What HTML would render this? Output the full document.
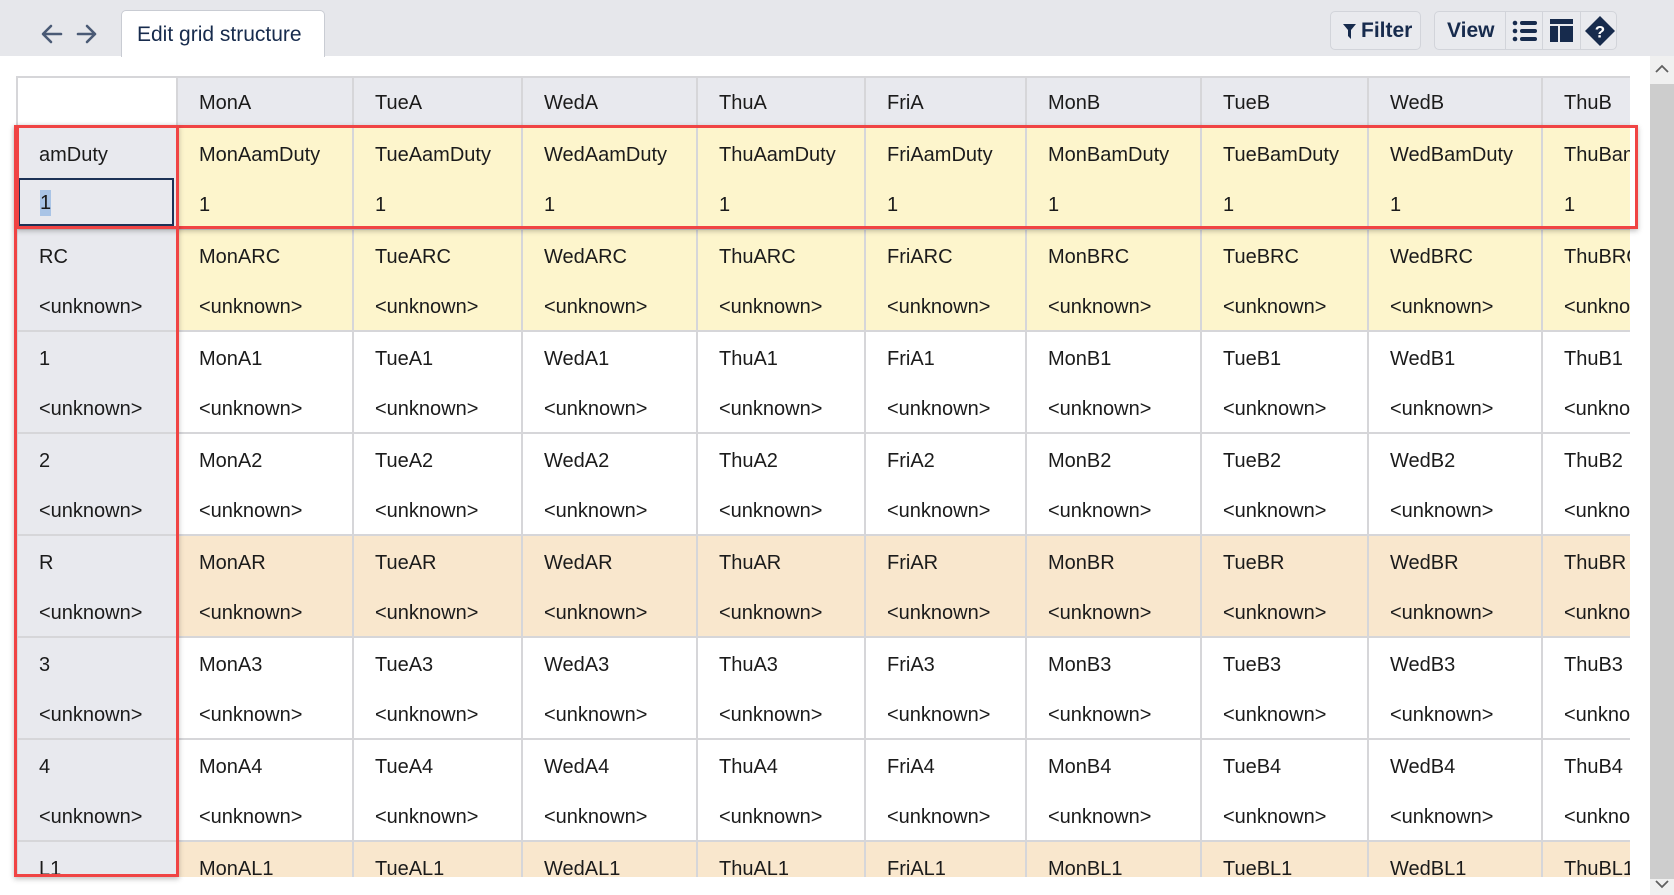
<!DOCTYPE html>
<html style="overflow:hidden"><head><meta charset="utf-8"><style>
*{box-sizing:border-box;margin:0;padding:0}
body{width:1674px;height:895px;overflow:hidden;background:#fff;font-family:"Liberation Sans",sans-serif;position:relative;color:#1b1b1b}
.top{position:absolute;left:0;top:0;width:1674px;height:56px;background:#e6e7eb}
.tab{position:absolute;left:121px;top:10px;width:204px;height:47px;background:#fff;border:1px solid #c9ccd3;border-bottom:none;border-radius:5px 5px 0 0;font-size:21px;color:#172b4d;padding:12px 0 0 15px}
.btn{position:absolute;top:11px;height:39px;background:#e9eaee;border:1px solid #d2d4da;border-radius:5px;color:#172b4d;font-weight:bold;font-size:21px}
.grid{position:absolute;left:16px;top:76px;width:1614px;height:801px;overflow:hidden}
table{border-collapse:collapse;table-layout:fixed;width:1705px}
td{border:2px solid #d6d6d9;height:102px;vertical-align:top;font-size:20px;padding:0 0 0 21px;white-space:nowrap;overflow:hidden;position:relative}
tr.h td{height:50px;background:#e8e9ee;padding-top:14px}
tr.h td:first-child{background:#fff}
td div{position:absolute;left:21px;line-height:26px}
td .a{top:14px}td .b{top:64px}
td:first-child{background:#e8e9ee}
tr.y td{background:#fdf5cc}tr.o td{background:#f9e7cd}
tr.y td:first-child,tr.o td:first-child{background:#e8e9ee}
.red{position:absolute;border:3px solid #f04444;box-shadow:0 2px 5px rgba(0,0,0,.25)}
.sb{position:absolute;left:1650px;top:56px;width:24px;height:839px;background:#f0f0f0;overflow:hidden}
</style></head><body>
<div class="top"></div>
<svg style="position:absolute;left:40px;top:23px" width="60" height="22"><g fill="none" stroke="#4a5a75" stroke-width="2.6" stroke-linecap="round" stroke-linejoin="round"><path d="M21 11H4M11 3L3 11l8 8"/><path d="M38 11h17M47 3l8 8-8 8"/></g></svg>
<div class="tab">Edit grid structure</div>
<div class="btn" style="left:1330px;width:91px"><svg style="position:absolute;left:12px;top:12px" width="13" height="15"><path d="M0 0h13L8 6v9L5 12V6z" fill="#172b4d"/></svg><span style="position:absolute;left:30px;top:7px">Filter</span></div>
<div class="btn" style="left:1434px;width:183px">
<span style="position:absolute;left:12px;top:7px">View</span>
<div style="position:absolute;left:70px;top:0;width:1px;height:37px;background:#d2d4da"></div>
<div style="position:absolute;left:107px;top:0;width:1px;height:37px;background:#d2d4da"></div>
<div style="position:absolute;left:145px;top:0;width:1px;height:37px;background:#d2d4da"></div>
<svg style="position:absolute;left:77px;top:8px" width="26" height="22" fill="#172b4d"><circle cx="3" cy="3" r="2.3"/><circle cx="3" cy="11" r="2.3"/><circle cx="3" cy="19" r="2.3"/><rect x="8" y="1" width="17" height="4" rx="2"/><rect x="8" y="9" width="17" height="4" rx="2"/><rect x="8" y="17" width="17" height="4" rx="2"/></svg>
<svg style="position:absolute;left:115px;top:7px" width="23" height="23" fill="#172b4d"><rect x="0" y="0" width="23" height="5"/><rect x="0" y="7" width="8" height="16"/><rect x="10" y="7" width="13" height="16"/></svg>
<svg style="position:absolute;left:149px;top:3px" width="32" height="32"><path d="M16 1L31 16 16 31 1 16z" fill="#172b4d"/><text x="16" y="22.5" text-anchor="middle" font-family="Liberation Sans" font-weight="bold" font-size="17" fill="#fff">?</text></svg>
</div>
<div class="grid"><table>
<colgroup><col style="width:160px"><col style="width:176px"><col style="width:169px"><col style="width:175px"><col style="width:168px"><col style="width:161px"><col style="width:175px"><col style="width:167px"><col style="width:174px"><col style="width:180px"></colgroup>
<tr class="h"><td></td><td>MonA</td><td>TueA</td><td>WedA</td><td>ThuA</td><td>FriA</td><td>MonB</td><td>TueB</td><td>WedB</td><td>ThuB</td></tr>
<tr class="y"><td><div class="a">amDuty</div></td><td><div class="a">MonAamDuty</div><div class="b">1</div></td><td><div class="a">TueAamDuty</div><div class="b">1</div></td><td><div class="a">WedAamDuty</div><div class="b">1</div></td><td><div class="a">ThuAamDuty</div><div class="b">1</div></td><td><div class="a">FriAamDuty</div><div class="b">1</div></td><td><div class="a">MonBamDuty</div><div class="b">1</div></td><td><div class="a">TueBamDuty</div><div class="b">1</div></td><td><div class="a">WedBamDuty</div><div class="b">1</div></td><td><div class="a">ThuBamDuty</div><div class="b">1</div></td></tr>
<tr class="y"><td><div class="a">RC</div><div class="b">&lt;unknown&gt;</div></td><td><div class="a">MonARC</div><div class="b">&lt;unknown&gt;</div></td><td><div class="a">TueARC</div><div class="b">&lt;unknown&gt;</div></td><td><div class="a">WedARC</div><div class="b">&lt;unknown&gt;</div></td><td><div class="a">ThuARC</div><div class="b">&lt;unknown&gt;</div></td><td><div class="a">FriARC</div><div class="b">&lt;unknown&gt;</div></td><td><div class="a">MonBRC</div><div class="b">&lt;unknown&gt;</div></td><td><div class="a">TueBRC</div><div class="b">&lt;unknown&gt;</div></td><td><div class="a">WedBRC</div><div class="b">&lt;unknown&gt;</div></td><td><div class="a">ThuBRC</div><div class="b">&lt;unknown&gt;</div></td></tr>
<tr><td><div class="a">1</div><div class="b">&lt;unknown&gt;</div></td><td><div class="a">MonA1</div><div class="b">&lt;unknown&gt;</div></td><td><div class="a">TueA1</div><div class="b">&lt;unknown&gt;</div></td><td><div class="a">WedA1</div><div class="b">&lt;unknown&gt;</div></td><td><div class="a">ThuA1</div><div class="b">&lt;unknown&gt;</div></td><td><div class="a">FriA1</div><div class="b">&lt;unknown&gt;</div></td><td><div class="a">MonB1</div><div class="b">&lt;unknown&gt;</div></td><td><div class="a">TueB1</div><div class="b">&lt;unknown&gt;</div></td><td><div class="a">WedB1</div><div class="b">&lt;unknown&gt;</div></td><td><div class="a">ThuB1</div><div class="b">&lt;unknown&gt;</div></td></tr>
<tr><td><div class="a">2</div><div class="b">&lt;unknown&gt;</div></td><td><div class="a">MonA2</div><div class="b">&lt;unknown&gt;</div></td><td><div class="a">TueA2</div><div class="b">&lt;unknown&gt;</div></td><td><div class="a">WedA2</div><div class="b">&lt;unknown&gt;</div></td><td><div class="a">ThuA2</div><div class="b">&lt;unknown&gt;</div></td><td><div class="a">FriA2</div><div class="b">&lt;unknown&gt;</div></td><td><div class="a">MonB2</div><div class="b">&lt;unknown&gt;</div></td><td><div class="a">TueB2</div><div class="b">&lt;unknown&gt;</div></td><td><div class="a">WedB2</div><div class="b">&lt;unknown&gt;</div></td><td><div class="a">ThuB2</div><div class="b">&lt;unknown&gt;</div></td></tr>
<tr class="o"><td><div class="a">R</div><div class="b">&lt;unknown&gt;</div></td><td><div class="a">MonAR</div><div class="b">&lt;unknown&gt;</div></td><td><div class="a">TueAR</div><div class="b">&lt;unknown&gt;</div></td><td><div class="a">WedAR</div><div class="b">&lt;unknown&gt;</div></td><td><div class="a">ThuAR</div><div class="b">&lt;unknown&gt;</div></td><td><div class="a">FriAR</div><div class="b">&lt;unknown&gt;</div></td><td><div class="a">MonBR</div><div class="b">&lt;unknown&gt;</div></td><td><div class="a">TueBR</div><div class="b">&lt;unknown&gt;</div></td><td><div class="a">WedBR</div><div class="b">&lt;unknown&gt;</div></td><td><div class="a">ThuBR</div><div class="b">&lt;unknown&gt;</div></td></tr>
<tr><td><div class="a">3</div><div class="b">&lt;unknown&gt;</div></td><td><div class="a">MonA3</div><div class="b">&lt;unknown&gt;</div></td><td><div class="a">TueA3</div><div class="b">&lt;unknown&gt;</div></td><td><div class="a">WedA3</div><div class="b">&lt;unknown&gt;</div></td><td><div class="a">ThuA3</div><div class="b">&lt;unknown&gt;</div></td><td><div class="a">FriA3</div><div class="b">&lt;unknown&gt;</div></td><td><div class="a">MonB3</div><div class="b">&lt;unknown&gt;</div></td><td><div class="a">TueB3</div><div class="b">&lt;unknown&gt;</div></td><td><div class="a">WedB3</div><div class="b">&lt;unknown&gt;</div></td><td><div class="a">ThuB3</div><div class="b">&lt;unknown&gt;</div></td></tr>
<tr><td><div class="a">4</div><div class="b">&lt;unknown&gt;</div></td><td><div class="a">MonA4</div><div class="b">&lt;unknown&gt;</div></td><td><div class="a">TueA4</div><div class="b">&lt;unknown&gt;</div></td><td><div class="a">WedA4</div><div class="b">&lt;unknown&gt;</div></td><td><div class="a">ThuA4</div><div class="b">&lt;unknown&gt;</div></td><td><div class="a">FriA4</div><div class="b">&lt;unknown&gt;</div></td><td><div class="a">MonB4</div><div class="b">&lt;unknown&gt;</div></td><td><div class="a">TueB4</div><div class="b">&lt;unknown&gt;</div></td><td><div class="a">WedB4</div><div class="b">&lt;unknown&gt;</div></td><td><div class="a">ThuB4</div><div class="b">&lt;unknown&gt;</div></td></tr>
<tr class="o"><td><div class="a">L1</div></td><td><div class="a">MonAL1</div></td><td><div class="a">TueAL1</div></td><td><div class="a">WedAL1</div></td><td><div class="a">ThuAL1</div></td><td><div class="a">FriAL1</div></td><td><div class="a">MonBL1</div></td><td><div class="a">TueBL1</div></td><td><div class="a">WedBL1</div></td><td><div class="a">ThuBL1</div></td></tr>
</table></div>
<div style="position:absolute;left:18px;top:178px;width:156px;height:48px;border:2px solid #1c3256;background:#e8e9ee"><span style="position:absolute;left:20px;top:10px;font-size:20px;line-height:26px;background:#a9c4e6">1</span></div>
<div class="red" style="left:16px;top:125px;width:1622px;height:104px"></div>
<div class="red" style="left:14px;top:125px;width:165px;height:752px"></div>
<div class="sb"><div style="position:absolute;left:0;top:28px;width:24px;height:795px;background:#cdcdcd"></div>
<svg style="position:absolute;left:5px;top:8px" width="14" height="10"><path d="M1 8l6-6 6 6" fill="none" stroke="#606060" stroke-width="1.8"/></svg>
<svg style="position:absolute;left:5px;top:823px" width="14" height="10"><path d="M1 2l6 6 6-6" fill="none" stroke="#606060" stroke-width="1.8"/></svg></div>
</body></html>
